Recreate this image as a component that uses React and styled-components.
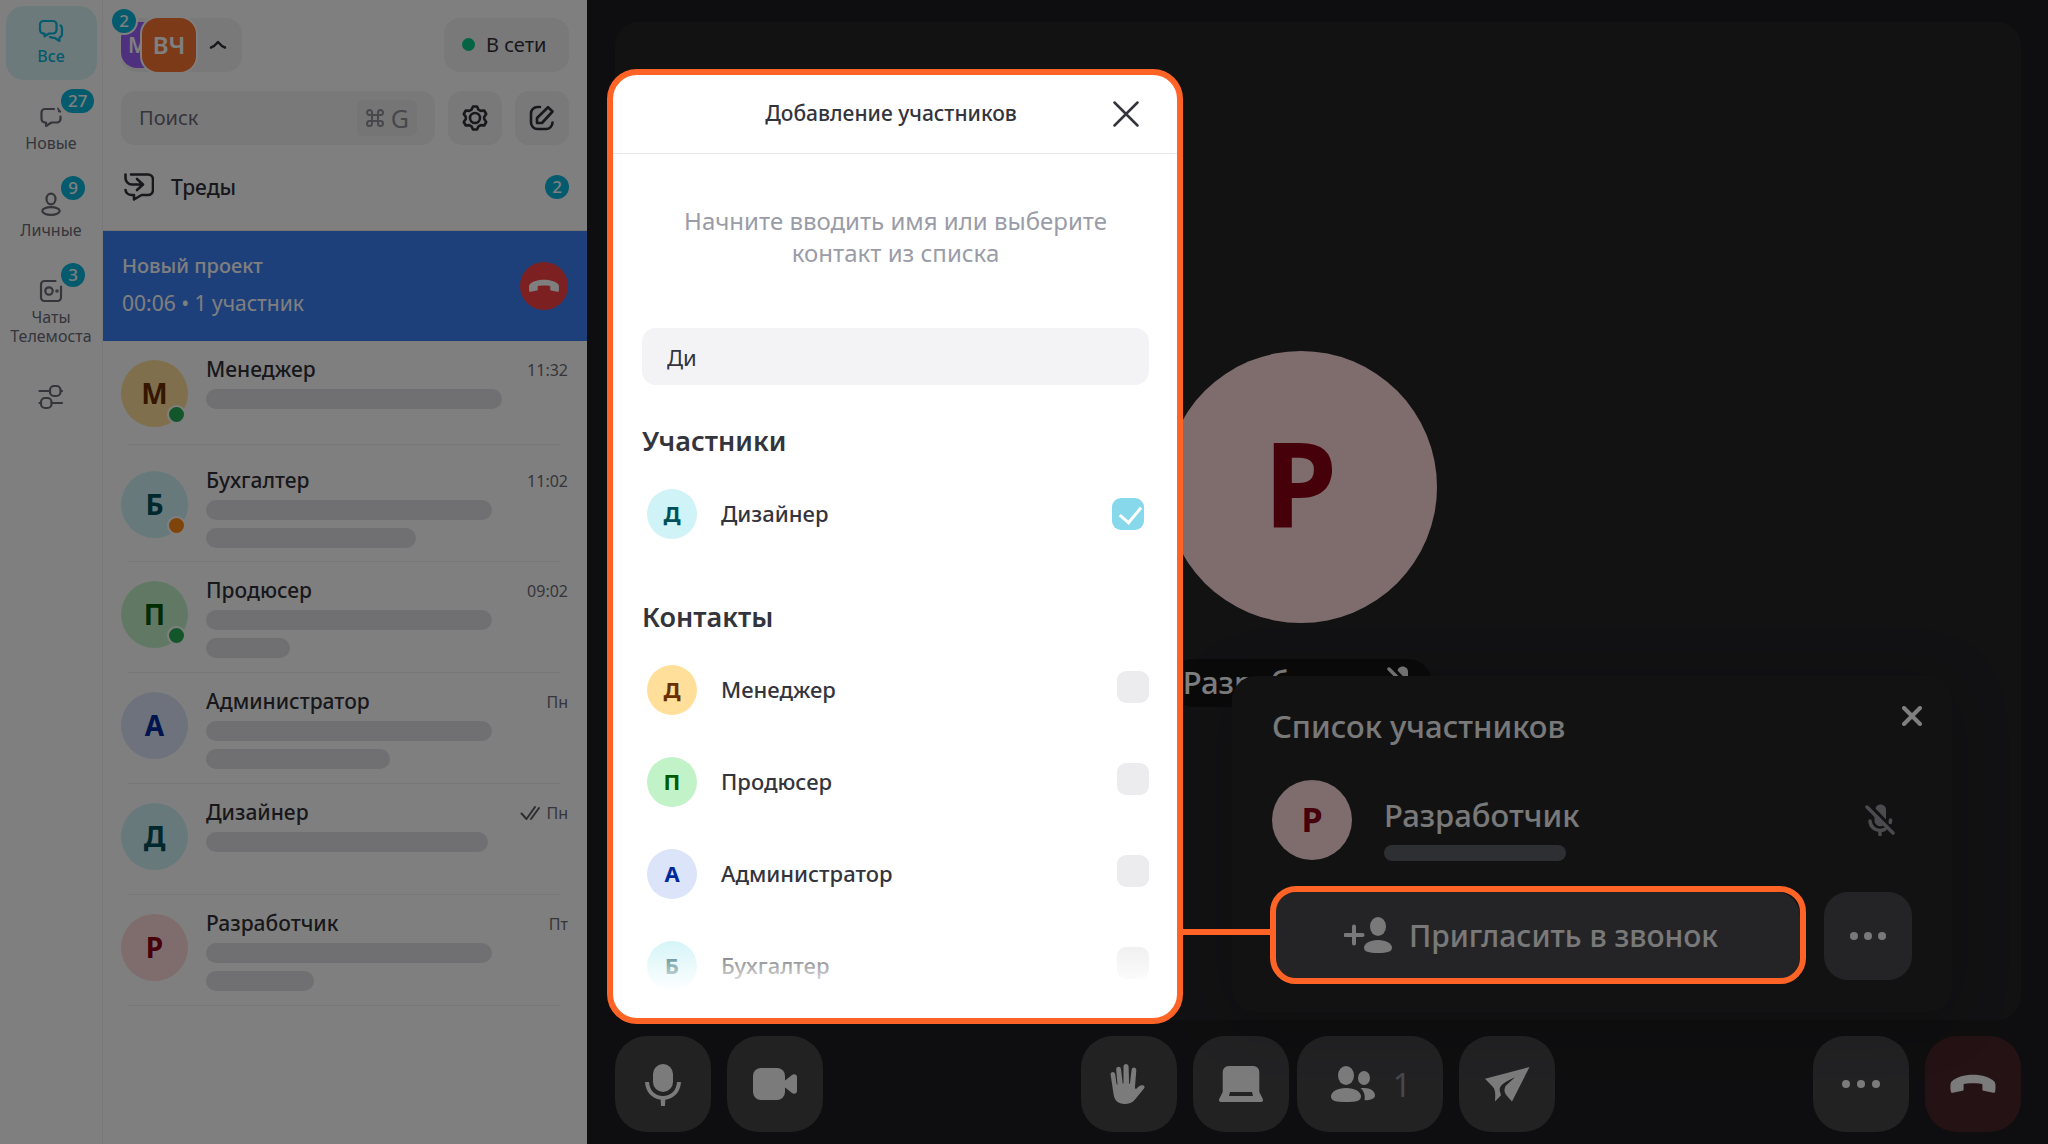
import { useState } from "react"
import styled, { createGlobalStyle } from "styled-components"

const GlobalStyle = createGlobalStyle`
  * {
    box-sizing: border-box;
  }

  body {
    margin: 0;
    font-family: "Noto Sans", "Open Sans", sans-serif;
    color: #313138;
  }

  h1, h2, h3, p, ul {
    margin: 0;
    padding: 0;
  }

  ul {
    list-style: none;
  }

  button, input {
    font-family: inherit;
    color: inherit;
    border: none;
    padding: 0;
    background: none;
  }

  a {
    text-decoration: none;
    color: inherit;
  }

  svg {
    display: block;
    flex-shrink: 0;
  }
`

const PageContainer = styled.div`
  position: relative;
  display: flex;
  min-height: 100vh;
  background-color: #FFFFFF;
`

// dims everything except the dialog and the highlighted outlines
const Scrim = styled.div`
  position: absolute;
  inset: 0;
  z-index: 1;
  background-color: rgba(0, 0, 0, 0.5);
`

const Badge = styled.span`
  min-width: 24px;
  height: 24px;
  padding: 0 7px;
  border-radius: 12px;
  background-color: #07B6DA;
  color: #FFFFFF;
  font-size: 17px;
  font-weight: 500;
  line-height: 23px;
  text-align: center;
`

const CornerBadge = styled(Badge)`
  position: absolute;
  left: ${({ $left }) => $left}px;
  top: ${({ $top }) => $top}px;
  box-shadow: 0 0 0 2px #FFFFFF;
`

const Avatar = styled.span`
  position: relative;
  display: flex;
  align-items: center;
  justify-content: center;
  flex-shrink: 0;
  width: ${({ $size }) => $size}px;
  height: ${({ $size }) => $size}px;
  padding-bottom: ${({ $font }) => Math.round($font / 14)}px;
  border-radius: 50%;
  background-color: ${({ $bg }) => $bg};
  color: ${({ $color }) => $color};
  font-size: ${({ $font }) => $font}px;
  font-weight: 700;
  line-height: 1;
`

/* ---------- left rail ---------- */

const Rail = styled.nav`
  display: flex;
  flex-direction: column;
  align-items: center;
  gap: 13px;
  flex-shrink: 0;
  width: 103px;
  padding-top: 6px;
  border-right: 1px solid #F1F1F3;
`

const RailItem = styled.a`
  display: flex;
  flex-direction: column;
  align-items: center;
  gap: 3px;
  width: 91px;
  min-height: 74px;
  padding-top: 10px;
  border-radius: 18px;
  font-size: 16px;
  line-height: 19px;
  text-align: center;
  color: ${({ $active }) => $active ? "#07B6DA" : "#6B6B76"};
  font-weight: ${({ $active }) => $active ? 500 : 400};
  background-color: ${({ $active }) => $active ? "#D8F4F9" : "transparent"};

  &:last-child {
    margin-top: 14px;
  }

  .icon {
    position: relative;
  }
`

/* ---------- chat list ---------- */

const Sidebar = styled.aside`
  flex-shrink: 0;
  width: 484px;

  .top {
    display: flex;
    flex-direction: column;
    gap: 19px;
    padding: 18px 18px 0;
  }

  .line {
    display: flex;
    gap: 13px;
  }
`

const AccountButton = styled.button`
  position: relative;
  display: flex;
  align-items: center;
  width: 121px;
  height: 54px;
  margin-right: auto;
  border-radius: 16px;
  background-color: #F2F2F3;

  svg {
    margin-left: 12px;
  }
`

const AccountTile = styled.span`
  display: flex;
  align-items: center;
  justify-content: center;
  width: 54px;
  height: 54px;
  padding-bottom: 1px;
  border-radius: 16px;
  background-color: ${({ $bg }) => $bg};
  color: #FFFFFF;
  font-size: 24px;
  font-weight: 600;
  box-shadow: 0 0 0 2px #FFFFFF;

  &:first-child {
    justify-content: flex-start;
    width: 46px;
    height: 46px;
    margin-right: -25px;
    padding-left: 7px;
    font-size: 21px;
    box-shadow: none;
  }
`

const StatusButton = styled.button`
  display: flex;
  align-items: center;
  gap: 11px;
  width: 125px;
  height: 54px;
  padding: 0 0 2px 18px;
  border-radius: 16px;
  background-color: #F2F2F3;
  font-size: 20px;

  &::before {
    content: "";
    width: 13px;
    height: 13px;
    border-radius: 50%;
    background-color: #0AC886;
  }
`

const SearchBox = styled.label`
  display: flex;
  align-items: center;
  flex: 1;
  min-width: 0;
  height: 54px;
  padding: 0 18px;
  border-radius: 14px;
  background-color: #F2F2F3;

  input {
    flex: 1;
    min-width: 0;
    padding-bottom: 2px;
    font-size: 20px;

    &::placeholder {
      color: #6B6B76;
      opacity: 1;
    }
  }

  kbd {
    display: flex;
    align-items: center;
    gap: 6px;
    height: 36px;
    padding: 0 8px;
    border-radius: 6px;
    background-color: #EBEBED;
    color: #8E8E99;
    font-family: inherit;
    font-size: 25px;
  }
`

const SquareButton = styled.button`
  display: flex;
  align-items: center;
  justify-content: center;
  flex-shrink: 0;
  width: 54px;
  height: 54px;
  border-radius: 14px;
  background-color: #F2F2F3;
`

const ThreadsLink = styled.a`
  display: flex;
  align-items: center;
  gap: 17px;
  height: 86px;
  padding: 0 18px 2px 21px;
  border-bottom: 1px solid #E8E8EA;
  font-size: 21px;
  font-weight: 500;

  ${Badge} {
    margin-left: auto;
  }
`

const CallBanner = styled.section`
  display: flex;
  align-items: center;
  justify-content: space-between;
  height: 110px;
  padding: 0 19px;
  background-color: #3C80F4;
  color: #FFFFFF;
  font-size: 21px;
  line-height: 28px;

  .info {
    padding-bottom: 4px;
  }

  h2 {
    margin-bottom: 9px;
    font-size: 20px;
    font-weight: 500;
  }

  button {
    display: flex;
    align-items: center;
    justify-content: center;
    width: 48px;
    height: 48px;
    border-radius: 50%;
    background-color: #F94144;
  }
`

const ChatRow = styled.li`
  display: flex;
  gap: 18px;
  height: 111px;
  margin: 0 27px 0 24px;
  padding-top: 19px;
  border-bottom: 1px solid #EFEFF0;

  &:first-child {
    height: 104px;
  }

  &:nth-child(2) {
    height: 117px;
    padding-top: 26px;
  }

  ${Avatar} {
    margin-left: -6px;
  }

  .status {
    position: absolute;
    right: 2px;
    bottom: 3px;
    width: 19px;
    height: 19px;
    border: 2px solid #FFFFFF;
    border-radius: 50%;
  }

  .content {
    flex: 1;
    margin-right: -8px;
  }

  .title {
    display: flex;
    align-items: center;
    gap: 6px;
    height: 19px;
    margin-bottom: 10px;
  }

  .title svg {
    color: #5B5B66;
  }

  h3 {
    margin-right: auto;
    font-size: 21px;
    font-weight: 500;
    line-height: 19px;
  }

  time {
    font-size: 16px;
    color: #6B6B76;
  }
`

const TextBar = styled.div`
  width: ${({ $width }) => $width}px;
  height: 20px;
  margin-bottom: 8px;
  border-radius: 10px;
  background-color: #E0E0E6;
`

/* ---------- call ---------- */

const CallArea = styled.main`
  display: flex;
  flex-direction: column;
  flex: 1;
  gap: 16px;
  min-width: 0;
  padding: 22px 27px 12px 28px;
  background-color: #1D1D20;
  color: #FFFFFF;
`

const Stage = styled.section`
  display: flex;
  flex-direction: column;
  align-items: center;
  justify-content: center;
  flex: 1;
  gap: 36px;
  padding-right: 35px;
  border-radius: 24px;
  background-color: #242427;
`

const SpeakerName = styled.div`
  display: flex;
  align-items: center;
  gap: 8px;
  height: 48px;
  margin-bottom: -16px;
  padding: 0 14px 2px;
  border-radius: 24px;
  background-color: #141416;
  font-size: 31px;
  font-weight: 500;
  line-height: 46px;
`

const Controls = styled.footer`
  display: grid;
  grid-template-columns: 1fr auto 1fr;

  .group {
    display: flex;
    gap: 16px;
  }

  .pair {
    display: flex;
    gap: 8px;
  }

  .group:last-child {
    justify-content: flex-end;
  }
`

const ControlButton = styled.button`
  display: flex;
  align-items: center;
  justify-content: center;
  gap: 16px;
  width: ${({ $wide }) => $wide ? 146 : 96}px;
  height: 96px;
  border-radius: 32px;
  background-color: ${({ $danger }) => $danger ? "#482428" : "#444447"};
  color: #8E8E98;
  font-size: 32px;

  svg {
    color: #F6F6F6;
  }
`

const Participants = styled.section`
  position: absolute;
  right: 96px;
  bottom: 132px;
  width: 720px;
  height: 336px;
  padding: 30px 40px 32px;
  border-radius: 24px;
  background-color: #242427;
  box-shadow: 0 8px 60px rgba(0, 0, 0, 0.2);
  color: #FFFFFF;

  header {
    display: flex;
    justify-content: space-between;
    align-items: flex-start;
    height: 74px;
    margin-right: -10px;
  }

  h2 {
    font-size: 31px;
    font-weight: 500;
    line-height: 40px;
    color: #F2F2F2;
  }

  .person {
    display: flex;
    gap: 32px;
    height: 80px;
    margin-bottom: 32px;
  }

  .person svg {
    margin: 24px 16px 0 auto;
  }

  h3 {
    margin: 15px 0 10px;
    font-size: 31px;
    font-weight: 500;
    line-height: 40px;
    color: #F2F2F2;
  }

  .bar {
    width: 182px;
    height: 16px;
    border-radius: 8px;
    background-color: #5D5E64;
  }

  .actions {
    display: flex;
    gap: 24px;
  }
`

const PanelButton = styled.button`
  display: flex;
  align-items: center;
  justify-content: center;
  gap: 17px;
  width: ${({ $grow }) => $grow ? "100%" : "88px"};
  height: 88px;
  padding: ${({ $grow }) => $grow ? "0 10px 2px 0" : "0"};
  border-radius: 24px;
  background-color: #48494F;
  color: #F2F2F2;
  font-size: 30px;
  font-weight: 500;
`

const Highlight = styled.div`
  position: relative;
  flex: 1;

  &::before {
    content: "";
    position: absolute;
    z-index: 2;
    right: 100%;
    top: 37px;
    width: 120px;
    height: 6px;
    background-color: #FF6426;
  }

  &::after {
    content: "";
    position: absolute;
    z-index: 2;
    inset: -6px -6px -4px -2px;
    border: 6px solid #FF6426;
    border-radius: 26px;
    pointer-events: none;
  }
`

/* ---------- dialog ---------- */

const Dialog = styled.section`
  position: absolute;
  z-index: 3;
  left: 607px;
  top: 69px;
  width: 576px;
  border: 6px solid #FF6426;
  border-radius: 30px;
  background-color: #FFFFFF;
  color: #34343D;

  header {
    display: flex;
    align-items: center;
    height: 79px;
    padding: 0 34px 0 62px;
    border-bottom: 1px solid #E9E9EB;
  }

  h1 {
    flex: 1;
    padding: 0 2px 2px 0;
    font-size: 21px;
    font-weight: 500;
    text-align: center;
  }

  .body {
    padding: 51px 28px 27px 29px;
  }

  .hint {
    margin: 0 24px 59px;
    font-size: 24px;
    line-height: 32px;
    text-align: center;
    color: #9A9CA8;
  }

  h2 {
    font-size: 27px;
    font-weight: 600;
    line-height: 36px;
  }
`

const NameInput = styled.input`
  display: block;
  width: 100%;
  height: 57px;
  margin-bottom: 38px;
  padding: 0 25px;
  border-radius: 14px;
  background-color: #F3F3F6;
  font-size: 22px;
`

const ContactList = styled.ul`
  position: relative;
  display: flex;
  flex-direction: column;
  gap: 42px;
  padding: 30px 0 0 5px;

  &.members {
    padding-right: 5px;
    padding-bottom: 60px;
  }

  &.contacts input {
    margin-bottom: 6px;
  }

  &.contacts::after {
    content: "";
    position: absolute;
    left: 0;
    right: 0;
    bottom: 0;
    height: 58px;
    background: linear-gradient(rgba(255, 255, 255, 0), #FFFFFF);
    pointer-events: none;
  }
`

const Contact = styled.label`
  display: flex;
  align-items: center;
  gap: 24px;
  height: 50px;
  font-size: 22px;
  font-weight: 500;

  .name {
    padding-bottom: 2px;
  }

  input {
    position: relative;
    appearance: none;
    width: 32px;
    height: 32px;
    margin: 0 0 0 auto;
    border-radius: 9px;
    background-color: #ECECEE;
  }

  input:checked {
    background-color: #86D8EA;
  }

  input:checked::after {
    content: "";
    position: absolute;
    left: 12px;
    top: 4px;
    width: 10px;
    height: 18px;
    border: solid #FFFFFF;
    border-width: 0 3px 3px 0;
    transform: rotate(40deg);
  }
`

const CloseButton = styled.button`
  display: flex;
  padding: 4px;
`

/* ---------- icons ---------- */

const Stroke = ({ size = 28, width = 2, children, ...rest }) => (
  <svg
    width={size}
    height={size}
    viewBox={`0 0 ${size} ${size}`}
    fill="none"
    stroke="currentColor"
    strokeWidth={width}
    strokeLinecap="round"
    strokeLinejoin="round"
    {...rest}
  >
    {children}
  </svg>
)

const ChatsIcon = () => (
  <Stroke width={2.2}>
    <path d="M6.500 5h9.500a3.500 3.500 0 0 1 3.500 3.500v5.500a3.500 3.500 0 0 1-3.500 3.500h-4l-4.500 2.800V17.500H6.500A3.500 3.500 0 0 1 3 14V8.500A3.500 3.500 0 0 1 6.500 5z" />
    <path d="M23.500 9.500c1 .600 1.500 1.500 1.500 2.700V18c0 1.800-1 3-2.500 3.500V25l-5-3.200c-1.500 0-3-.100-4.500-.800" />
  </Stroke>
)

const NewIcon = () => (
  <Stroke width={2.2}>
    <path d="M17 6H8a3.500 3.500 0 0 0-3.500 3.500V16A3.500 3.500 0 0 0 8 19.500h1V23l5.500-3.500H20a3.500 3.500 0 0 0 3.500-3.500v-2.500" />
    <path d="M21 5l3 4h-2z" fill="currentColor" strokeWidth="1" />
  </Stroke>
)

const PersonIcon = () => (
  <Stroke width={2.2}>
    <ellipse cx="14" cy="9" rx="4.500" ry="5.300" />
    <ellipse cx="14" cy="21" rx="8.700" ry="3.800" />
  </Stroke>
)

const MeetIcon = () => (
  <Stroke width={2.2}>
    <path d="M18.500 4H7.500A3.500 3.500 0 0 0 4 7.500v13A3.500 3.500 0 0 0 7.500 24h13a3.500 3.500 0 0 0 3.500-3.500V9.500" />
    <circle cx="12" cy="14" r="3.700" />
    <circle cx="20" cy="14" r="0.700" fill="currentColor" />
  </Stroke>
)

const SlidersIcon = () => (
  <Stroke width={2.2}>
    <path d="M2.500 8H13M24 8h1M2.500 20H4M14.500 20h10.500" />
    <rect x="13" y="3" width="10.500" height="10" rx="4" />
    <rect x="4" y="15" width="10.500" height="10" rx="4" />
  </Stroke>
)

const ChevronUpIcon = () => (
  <Stroke size={20} width={2.4}>
    <path d="M3 12.500c3-1 5-3 7-5.500 2 2.500 4 4.500 7 5.500" />
  </Stroke>
)

const CommandIcon = () => (
  <Stroke size={20} width={2}>
    <path d="M7 7h6v6H7zM7 7H4.500A2.500 2.500 0 1 1 7 4.500zM13 7V4.500A2.500 2.500 0 1 1 15.500 7zM13 13h2.500a2.500 2.500 0 1 1-2.500 2.500zM7 13v2.500A2.500 2.500 0 1 1 4.500 13z" />
  </Stroke>
)

const GearIcon = () => (
  <Stroke size={28} width={2.6}>
    <path d="M12 2.500h4l1.500 3.200 2.200 1.200 3.500-.400 2 3.500-2 2.900v2.200l2 2.900-2 3.500-3.500-.400-2.200 1.200L16 25.500h-4l-1.500-3.200-2.200-1.200-3.500.400-2-3.500 2-2.900v-2.200l-2-2.900 2-3.500 3.500.400 2.200-1.200z" />
    <circle cx="14" cy="14" r="5" />
  </Stroke>
)

const EditIcon = () => (
  <Stroke size={28} width={2.6}>
    <path d="M12 3H9.500A6.500 6.500 0 0 0 3 9.500v9A6.500 6.500 0 0 0 9.500 25H18a6.500 6.500 0 0 0 6.500-6.500" />
    <path d="M9 19v-5L20 3.200l4.500 4.300L14 19z" />
  </Stroke>
)

const ThreadsIcon = () => (
  <Stroke size={30} width={2.6}>
    <path d="M7 2.500h17a5 5 0 0 1 5 5V18a5 5 0 0 1-5 5h-6.500L10 27.500V23H7.500A6 6 0 0 1 1.500 18" />
    <path d="M1.500 2.500v3.500a6.500 6.500 0 0 0 6.500 6.500h10.500M13 7l6 5.500-6 5.500" />
  </Stroke>
)

const ChecksIcon = () => (
  <Stroke size={20} width={2}>
    <path d="M1.500 10.500l5 5.500L15 4M11 16l8-11" />
  </Stroke>
)

const HangUpIcon = ({ width = 48 }) => (
  <svg width={width} height={width} viewBox="0 0 48 48" fill="currentColor">
    <path d="M24 14.700c9 0 17 2.300 21.500 7 1.200 1.300 1.300 5.300.700 9.500-.200 1.500-.800 1.800-2 1.600l-9.500-2c-1-.200-1.300-.700-1.300-1.600v-5c-2.500-1.300-16.300-1.300-18.800 0v5c0 .900-.300 1.400-1.300 1.600l-9.500 2c-1.200.200-1.800-.100-2-1.600-.6-4.200-.5-8.200.7-9.500 4.500-4.700 12.500-7 21.500-7z" />
  </svg>
)

const MicIcon = () => (
  <svg width="48" height="48" viewBox="0 0 48 48" fill="currentColor">
    <rect x="14" y="4" width="20" height="28" rx="10" />
    <path d="M6 22h4c.600 8.500 6 14 14 14s13.400-5.500 14-14h4c-.600 9.500-6.400 16.300-15.700 17.700L26 46h-4l-.300-6.300C12.400 38.300 6.600 31.500 6 22z" />
  </svg>
)

const CameraIcon = () => (
  <svg width="48" height="48" viewBox="0 0 48 48" fill="currentColor">
    <rect x="2" y="8" width="32" height="32" rx="8" />
    <path d="M34 20.500l7-5.500c2.500-1.600 5-.500 5 2.500v13c0 3-2.500 4.100-5 2.500l-7-5.500z" />
  </svg>
)

const HandIcon = () => (
  <svg width="48" height="48" viewBox="0 0 48 48" fill="currentColor">
    <path d="M5.600 14.500c-.300-3.200 4-3.600 4.500-.400l1.600 10.400h.8L11.200 9.400c-.200-3.500 4.400-3.700 4.800-.300l1.700 14.400h.8V6.500c0-3.400 5-3.400 5.100 0l.500 17.200h.8l1.700-13.900c.500-3.300 4.900-2.900 4.700.5L30 26.500c-.100 2.500.800 3.200 2 1.600 1.500-1.900 3.200-3 5.500-2.900 2 .1 2.800 1.700 1.500 3.300l-9.200 11.300c-2.500 3-6 4.200-10.200 4.200-6.600 0-10-3.500-11-9.500z" />
  </svg>
)

const LaptopIcon = () => (
  <svg width="48" height="48" viewBox="0 0 48 48" fill="currentColor" fillRule="evenodd">
    <path d="M11.500 6h25a5.800 5.800 0 0 1 5.800 5.800V32l3.500 7c.800 1.600-.100 3-1.800 3H4c-1.700 0-2.600-1.400-1.800-3l3.500-7V11.800A5.800 5.800 0 0 1 11.500 6zM13 32l-1 4h24l-1-4z" />
  </svg>
)

const PeopleIcon = () => (
  <svg width="48" height="48" viewBox="0 0 48 48" fill="currentColor">
    <ellipse cx="17" cy="15.500" rx="8" ry="9.500" />
    <path d="M17 28c9 0 15 4 15 8.500S27 42 17 42 2 41 2 36.500 8 28 17 28z" />
    <ellipse cx="35" cy="18" rx="6" ry="7" />
    <path d="M31.500 28.300c8-1.500 14.500 2 14.500 7 0 3.500-4 5-10.500 5C36.500 35.500 35 31 31.500 28.300z" />
  </svg>
)

const SendIcon = () => (
  <svg width="48" height="48" viewBox="0 0 48 48" fill="currentColor">
    <path d="M46.500 7L29 41.500c-5.500-6-9.500-9-6.500-15.500L32 17.300c-9.500 4.500-16 8-15.300 13.200l1.300 4.800-6 6.200c.300-6 1-11.500-2.500-15L2 18.700z" />
  </svg>
)

const DotsIcon = ({ gap = 15 }) => (
  <svg width="48" height="48" viewBox="0 0 48 48" fill="currentColor">
    <circle cx={24 - gap} cy="24" r="4" />
    <circle cx="24" cy="24" r="4" />
    <circle cx={24 + gap} cy="24" r="4" />
  </svg>
)

const AddPersonIcon = () => (
  <svg width="48" height="40" viewBox="0 0 48 40" fill="currentColor">
    <ellipse cx="34" cy="11.500" rx="8" ry="9.500" />
    <path d="M34 25c8.500 0 14 3.800 14 7.800S43.500 38 34 38s-14-1.200-14-5.200S25.500 25 34 25z" />
    <path d="M10 11.500v17M1.500 20h17" stroke="currentColor" strokeWidth="4" strokeLinecap="round" />
  </svg>
)

const MicOffIcon = ({ color }) => (
  <svg width="32" height="32" viewBox="0 0 32 32" fill="none" color={color} stroke="currentColor" strokeWidth="3.5" strokeLinecap="round">
    <path d="M11.500 4.500C12.300 1.500 14.300.500 16.500.500c3.300 0 5.500 2.300 5.500 5.500v9.500z" fill="currentColor" stroke="none" />
    <path d="M10.500 11v6a6 6 0 0 0 9 4.500z" fill="currentColor" stroke="none" />
    <path d="M6 17c.500 6 5 9.500 10 9.500 1.700 0 3.300-.400 4.700-1.100M16 27v3.500M26.500 16l-.200 2.500M3 3l26 26" />
  </svg>
)

/* ---------- data ---------- */

const palette = {
  yellow: { $bg: "#FFDF99", $color: "#6B2E00" },
  cyan: { $bg: "#CFF3F7", $color: "#00505A" },
  green: { $bg: "#C2F2C8", $color: "#005A00" },
  blue: { $bg: "#DBE4F8", $color: "#00289B" },
  pink: { $bg: "#FFDADD", $color: "#8C0014" }
}

const railItems = [
  { label: "Все", Icon: ChatsIcon, active: true },
  { label: "Новые", Icon: NewIcon, count: 27 },
  { label: "Личные", Icon: PersonIcon, count: 9 },
  { label: "Чаты Телемоста", Icon: MeetIcon, count: 3 }
]

const chats = [
  { name: "Менеджер", letter: "М", tone: "yellow", time: "11:32", status: "#24AC54", bars: [296] },
  { name: "Бухгалтер", letter: "Б", tone: "cyan", time: "11:02", status: "#FF8812", bars: [286, 210] },
  { name: "Продюсер", letter: "П", tone: "green", time: "09:02", status: "#24AC54", bars: [286, 84] },
  { name: "Администратор", letter: "А", tone: "blue", time: "Пн", bars: [286, 184] },
  { name: "Дизайнер", letter: "Д", tone: "cyan", time: "Пн", read: true, bars: [282] },
  { name: "Разработчик", letter: "Р", tone: "pink", time: "Пт", bars: [286, 108] }
]

const contacts = [
  { name: "Менеджер", letter: "Д", tone: "yellow" },
  { name: "Продюсер", letter: "П", tone: "green" },
  { name: "Администратор", letter: "А", tone: "blue" },
  { name: "Бухгалтер", letter: "Б", tone: "cyan" }
]

function ContactItem({ contact, checked, onChange }) {
  return (
    <li>
      <Contact>
        <Avatar $size={50} $font={22} {...palette[contact.tone]}>{contact.letter}</Avatar>
        <span className="name">{contact.name}</span>
        <input type="checkbox" checked={checked} onChange={onChange} />
      </Contact>
    </li>
  )
}

function AddMembersDialog() {
  const [query, setQuery] = useState("Ди")
  const [selected, setSelected] = useState(["Дизайнер"])

  const toggle = (name) => {
    setSelected(selected.includes(name)
      ? selected.filter((item) => item !== name)
      : [...selected, name])
  }

  return (
    <Dialog role="dialog" aria-labelledby="dialog-title">
      <header>
        <h1 id="dialog-title">Добавление участников</h1>
        <CloseButton aria-label="Закрыть">
          <Stroke size={26} width={2.5}><path d="M1.500 1.500l23 23M24.500 1.500l-23 23" /></Stroke>
        </CloseButton>
      </header>

      <div className="body">
        <p className="hint">Начните вводить имя или выберите контакт из списка</p>

        <NameInput
          type="text"
          aria-label="Имя участника"
          value={query}
          onChange={(event) => setQuery(event.target.value)}
        />

        <h2>Участники</h2>
        <ContactList className="members">
          <ContactItem
            contact={{ name: "Дизайнер", letter: "Д", tone: "cyan" }}
            checked={selected.includes("Дизайнер")}
            onChange={() => toggle("Дизайнер")}
          />
        </ContactList>

        <h2>Контакты</h2>
        <ContactList className="contacts">
          {contacts.map((contact) => (
            <ContactItem
              key={contact.name}
              contact={contact}
              checked={selected.includes(contact.name)}
              onChange={() => toggle(contact.name)}
            />
          ))}
        </ContactList>
      </div>
    </Dialog>
  )
}

function App() {
  return (
    <PageContainer>
      <GlobalStyle />

      <Rail>
        {railItems.map(({ label, Icon, count, active }) => (
          <RailItem key={label} href="#" $active={active}>
            <span className="icon">
              <Icon />
              {count && <CornerBadge $left={24} $top={-14}>{count}</CornerBadge>}
            </span>
            {label}
          </RailItem>
        ))}
        <RailItem href="#" aria-label="Настроить папки">
          <SlidersIcon />
        </RailItem>
      </Rail>

      <Sidebar>
        <div className="top">
          <div className="line">
            <AccountButton aria-label="Аккаунты">
              <AccountTile $bg="#9D60FF">М</AccountTile>
              <AccountTile $bg="#F97430">ВЧ</AccountTile>
              <CornerBadge $left={-9} $top={-9}>2</CornerBadge>
              <ChevronUpIcon />
            </AccountButton>
            <StatusButton>В сети</StatusButton>
          </div>

          <div className="line">
            <SearchBox>
              <input type="search" placeholder="Поиск" aria-label="Поиск" />
              <kbd><CommandIcon />G</kbd>
            </SearchBox>
            <SquareButton aria-label="Настройки"><GearIcon /></SquareButton>
            <SquareButton aria-label="Новый чат"><EditIcon /></SquareButton>
          </div>
        </div>

        <ThreadsLink href="#">
          <ThreadsIcon />
          Треды
          <Badge>2</Badge>
        </ThreadsLink>

        <CallBanner>
          <div className="info">
            <h2>Новый проект</h2>
            <p>00:06 • 1 участник</p>
          </div>
          <button aria-label="Завершить звонок"><HangUpIcon width={32} /></button>
        </CallBanner>

        <ul>
          {chats.map((chat) => (
            <ChatRow key={chat.name}>
              <Avatar $size={67} $font={28} {...palette[chat.tone]}>
                {chat.letter}
                {chat.status && <span className="status" style={{ backgroundColor: chat.status }} />}
              </Avatar>
              <div className="content">
                <div className="title">
                  <h3>{chat.name}</h3>
                  {chat.read && <ChecksIcon />}
                  <time>{chat.time}</time>
                </div>
                {chat.bars.map((width) => <TextBar key={width} $width={width} />)}
              </div>
            </ChatRow>
          ))}
        </ul>
      </Sidebar>

      <CallArea>
        <Stage>
          <Avatar $size={272} $font={118} {...palette.pink}>Р</Avatar>
          <SpeakerName>
            Разработчик
            <MicOffIcon color="#F2F2F2" />
          </SpeakerName>
        </Stage>

        <Controls>
          <div className="group">
            <ControlButton aria-label="Микрофон"><MicIcon /></ControlButton>
            <ControlButton aria-label="Камера"><CameraIcon /></ControlButton>
          </div>
          <div className="group">
            <ControlButton aria-label="Поднять руку"><HandIcon /></ControlButton>
            <div className="pair">
              <ControlButton aria-label="Демонстрация экрана"><LaptopIcon /></ControlButton>
              <ControlButton aria-label="Участники" $wide><PeopleIcon />1</ControlButton>
            </div>
            <ControlButton aria-label="Поделиться"><SendIcon /></ControlButton>
          </div>
          <div className="group">
            <ControlButton aria-label="Ещё"><DotsIcon /></ControlButton>
            <ControlButton aria-label="Завершить" $danger><HangUpIcon /></ControlButton>
          </div>
        </Controls>
      </CallArea>

      <Participants>
        <header>
          <h2>Список участников</h2>
          <button aria-label="Закрыть список">
            <Stroke size={20} width={4}><path d="M2 2l16 16M18 2L2 18" /></Stroke>
          </button>
        </header>
        <div className="person">
          <Avatar $size={80} $font={34} {...palette.pink}>Р</Avatar>
          <div>
            <h3>Разработчик</h3>
            <div className="bar" />
          </div>
          <MicOffIcon color="#96969F" />
        </div>
        <div className="actions">
          <Highlight>
            <PanelButton $grow><AddPersonIcon />Пригласить в звонок</PanelButton>
          </Highlight>
          <PanelButton aria-label="Ещё"><DotsIcon gap={14} /></PanelButton>
        </div>
      </Participants>

      <Scrim />
      <AddMembersDialog />
    </PageContainer>
  )
}

export default App
